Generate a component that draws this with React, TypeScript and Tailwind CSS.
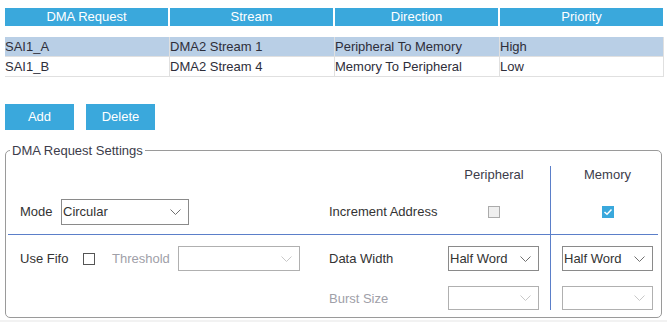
import React from "react";

const Chevron = ({ light }: { light?: boolean }) => (
  <svg width="11" height="6" viewBox="0 0 11 6" className="shrink-0">
    <polyline
      points="0.5,0.5 5.5,5.5 10.5,0.5"
      fill="none"
      stroke={light ? "#c8c8c8" : "#707070"}
      strokeWidth="1"
    />
  </svg>
);

function Select({
  className,
  value,
  disabled,
}: {
  className: string;
  value?: string;
  disabled?: boolean;
}) {
  return (
    <div
      className={
        "flex items-center justify-between bg-white pl-[1px] pr-[7px] border " +
        (disabled ? "border-[#b0b0b0] " : "border-[#8a8a8a] ") +
        className
      }
    >
      <span className="text-[13px] leading-[15px] text-[#333333]">{value ?? ""}</span>
      <Chevron light={disabled} />
    </div>
  );
}

const rows = [
  ["SAI1_A", "DMA2 Stream 1", "Peripheral To Memory", "High"],
  ["SAI1_B", "DMA2 Stream 4", "Memory To Peripheral", "Low"],
];

export default function App() {
  return (
    <div
      className="w-[667px] h-[322px] bg-white overflow-hidden text-[13px] text-[#333333]"
      style={{ fontFamily: '"Liberation Sans", Arial, sans-serif' }}
    >
      {/* Table header */}
      <div className="pt-[8px] pl-[5px] grid grid-cols-[163px_163px_163px_163px] gap-x-[2px]">
        {["DMA Request", "Stream", "Direction", "Priority"].map((h) => (
          <div
            key={h}
            className="h-[18px] bg-[#3aa8dc] text-white text-center leading-[18px]"
          >
            {h}
          </div>
        ))}
      </div>

      {/* Table rows */}
      <div className="mt-[11px] ml-[5px] w-[659px]">
        {rows.map((r, i) => (
          <div
            key={i}
            className={
              "grid grid-cols-[165px_165px_165px_164px] h-[20px] border-b border-[#e0e0e0] " +
              (i === 0 ? "bg-[#b9cfe6]" : "bg-white")
            }
          >
            {r.map((c, j) => (
              <div
                key={j}
                className="border-r border-[#e0e0e0] leading-[19px] text-[#2e2e3a] whitespace-nowrap"
              >
                {c}
              </div>
            ))}
          </div>
        ))}
      </div>

      {/* Buttons */}
      <div className="mt-[27px] ml-[5px] flex gap-[12px]">
        <button className="w-[69px] h-[26px] bg-[#3aa8dc] text-white text-[13px] leading-[26px]">
          Add
        </button>
        <button className="w-[69px] h-[26px] bg-[#3aa8dc] text-white text-[13px] leading-[26px]">
          Delete
        </button>
      </div>

      {/* Settings fieldset */}
      <fieldset className="mt-[13px] ml-[5px] w-[657px] border border-[#9a9a9a] rounded-[5px] px-[2px] pb-[7px]">
        <legend className="ml-[2px] px-[2px] text-[13px] leading-[15px] text-[#3c3c4a]">
          DMA Request Settings
        </legend>
        <div className="pt-[8px] grid grid-cols-[313px_117px_112px_108px] text-[#333333]">
          {/* Row 0: column headers */}
          <div className="h-[23px]" />
          <div className="h-[23px]" />
          <div className="h-[23px] text-center leading-[18px] text-[#3c3c4a]">Peripheral</div>
          <div className="h-[23px] border-l border-[#5b7fc9] pl-[6px] text-center leading-[18px] text-[#3c3c4a]">
            Memory
          </div>

          {/* Row 1: Mode / Increment Address */}
          <div className="h-[46px] border-b border-[#5b7fc9] flex items-center pl-[12px]">
            <span className="w-[41px] leading-[15px]">Mode</span>
            <Select className="w-[128px] h-[26px]" value="Circular" />
          </div>
          <div className="h-[46px] border-b border-[#5b7fc9] flex items-center pl-[8px]">
            <span className="leading-[15px] whitespace-nowrap">Increment Address</span>
          </div>
          <div className="h-[46px] border-b border-[#5b7fc9] flex items-center justify-center">
            <div className="w-[12px] h-[12px] border border-[#ababab] bg-[#efefef]" />
          </div>
          <div className="h-[46px] border-b border-l border-[#5b7fc9] flex items-center justify-center pl-[6px]">
            <div className="w-[12px] h-[12px] bg-[#3aa8dc] flex items-center justify-center">
              <svg width="10" height="8" viewBox="0 0 10 8">
                <polyline
                  points="1.5,4 4,6.3 8.5,1.5"
                  fill="none"
                  stroke="white"
                  strokeWidth="1.5"
                />
              </svg>
            </div>
          </div>

          {/* Row 2: Use Fifo / Data Width */}
          <div className="h-[47px] flex items-center pl-[12px]">
            <span className="w-[63px] leading-[15px] whitespace-nowrap">Use Fifo</span>
            <div className="w-[12px] h-[12px] border border-[#555555] bg-white" />
            <span className="ml-[17px] w-[66px] leading-[15px] text-[#a0a0a8]">Threshold</span>
            <Select className="w-[122px] h-[25px]" disabled />
          </div>
          <div className="h-[47px] flex items-center pl-[8px]">
            <span className="leading-[15px]">Data Width</span>
          </div>
          <div className="h-[47px] flex items-center pl-[10px]">
            <Select className="w-[91px] h-[25px]" value="Half Word" />
          </div>
          <div className="h-[47px] border-l border-[#5b7fc9] flex items-center pl-[11px]">
            <Select className="w-[91px] h-[25px]" value="Half Word" />
          </div>

          {/* Row 3: Burst Size */}
          <div className="h-[28px]" />
          <div className="h-[28px] flex items-end pl-[8px]">
            <span className="h-[24px] flex items-center leading-[15px] text-[#a0a0a8]">Burst Size</span>
          </div>
          <div className="h-[28px] flex items-end pl-[10px]">
            <Select className="w-[91px] h-[24px]" disabled />
          </div>
          <div className="h-[28px] border-l border-[#5b7fc9] flex items-end pl-[11px]">
            <Select className="w-[91px] h-[24px]" disabled />
          </div>
        </div>
      </fieldset>
      <div className="mt-[2px] h-[4px] bg-[#f2f2f2]" />
    </div>
  );
}
